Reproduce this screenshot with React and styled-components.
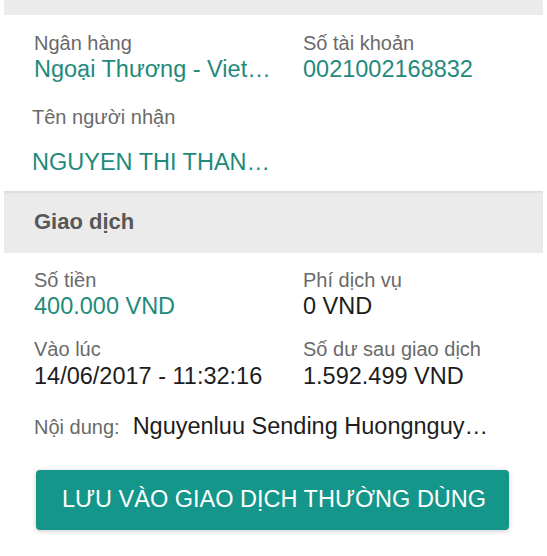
import React from "react";
import styled, { createGlobalStyle } from "styled-components";

const GlobalStyle = createGlobalStyle`
  html, body {
    margin: 0;
    padding: 0;
    background: #ffffff;
  }
  body {
    font-family: "Liberation Sans", Arial, sans-serif;
    -webkit-font-smoothing: antialiased;
  }
`;

const Page = styled.div`
  width: 547px;
  height: 556px;
  overflow: hidden;
  background: #ffffff;
`;

const TopStrip = styled.div`
  height: 15px;
  margin: 0 4px;
  background: #ebebeb;
`;

const Section = styled.div`
  margin: 0 4px;
  padding: ${(p) => p.$pad || "16px 0 15px 30px"};
`;

const Grid = styled.div`
  display: grid;
  grid-template-columns: 269px 1fr;
  row-gap: ${(p) => p.$gap || "22px"};
`;

const Field = styled.div`
  display: flex;
  flex-direction: column;
  min-width: 0;
  margin-left: ${(p) => p.$shift || "0"};
`;

const Label = styled.div`
  font-size: 20px;
  line-height: 24px;
  color: #6a6a6a;
  white-space: nowrap;
  margin-bottom: ${(p) => p.$space || "0"};
`;

const Value = styled.div`
  font-size: 23.5px;
  line-height: 28px;
  color: ${(p) => (p.$teal ? "#1f8a7b" : "#1d1d1d")};
  white-space: nowrap;
`;

const Band = styled.div`
  margin: 0 4px;
  height: 62px;
  display: flex;
  align-items: center;
  padding: 0 0 0 30px;
  box-sizing: border-box;
  background: #ebebeb;
  box-shadow: inset 0 2px 2px rgba(0, 0, 0, 0.06);
`;

const BandTitle = styled.div`
  font-size: 22px;
  font-weight: 700;
  color: #575757;
`;

const NoteRow = styled.div`
  display: flex;
  align-items: baseline;
  gap: 13px;
  margin-top: 22px;
  white-space: nowrap;
`;

const NoteLabel = styled.span`
  font-size: 20px;
  color: #6a6a6a;
`;

const NoteText = styled.span`
  font-size: 23.5px;
  line-height: 28px;
  color: #1d1d1d;
`;

const Button = styled.button`
  display: block;
  margin: 30px 0 0 36px;
  width: 473px;
  height: 60px;
  border: none;
  border-radius: 4px;
  background: #14968a;
  color: #ffffff;
  font-family: "Liberation Sans", Arial, sans-serif;
  font-size: 23.5px;
  padding: 0 0 2px 3px;
  box-shadow: 0 1px 5px rgba(0, 0, 0, 0.22);
  cursor: pointer;
`;

export default function App() {
  return (
    <Page>
      <GlobalStyle />
      <TopStrip />
      <Section>
        <Grid $gap="22px">
          <Field>
            <Label>Ngân hàng</Label>
            <Value $teal>Ngoại Thương - Viet…</Value>
          </Field>
          <Field>
            <Label>Số tài khoản</Label>
            <Value $teal>0021002168832</Value>
          </Field>
          <Field $shift="-2px">
            <Label $space="19px">Tên người nhận</Label>
            <Value $teal>NGUYEN THI THAN…</Value>
          </Field>
        </Grid>
      </Section>
      <Band>
        <BandTitle>Giao dịch</BandTitle>
      </Band>
      <Section $pad="15px 0 0 30px">
        <Grid $gap="17px">
          <Field>
            <Label>Số tiền</Label>
            <Value $teal>400.000 VND</Value>
          </Field>
          <Field>
            <Label>Phí dịch vụ</Label>
            <Value>0 VND</Value>
          </Field>
          <Field>
            <Label $space="1px">Vào lúc</Label>
            <Value>14/06/2017 - 11:32:16</Value>
          </Field>
          <Field>
            <Label $space="1px">Số dư sau giao dịch</Label>
            <Value>1.592.499 VND</Value>
          </Field>
        </Grid>
        <NoteRow>
          <NoteLabel>Nội dung:</NoteLabel>
          <NoteText>Nguyenluu Sending Huongnguy…</NoteText>
        </NoteRow>
      </Section>
      <Button>LƯU VÀO GIAO DỊCH THƯỜNG DÙNG</Button>
    </Page>
  );
}
